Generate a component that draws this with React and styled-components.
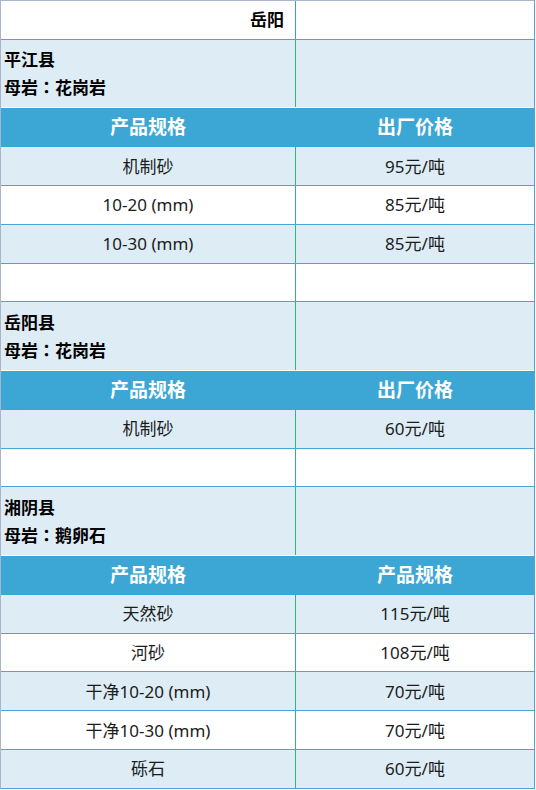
import React from 'react';
import styled, { createGlobalStyle } from 'styled-components';

const GlobalStyle = createGlobalStyle`
  html, body { margin: 0; padding: 0; background: #fff; }
  body { font-family: "Noto Sans", "Noto Sans CJK SC", sans-serif; }
`;

const LINE = '#49a5d5';
const GREEN = '#36b182';
const LIGHT = '#ddecf5';
const HEAD = '#3ca6d4';

const sections = [
  {
    county: '平江县',
    rock: '花岗岩',
    head: ['产品规格', '出厂价格'],
    items: [
      ['机制砂', '95元/吨'],
      ['10-20 (mm)', '85元/吨'],
      ['10-30 (mm)', '85元/吨'],
    ],
  },
  {
    county: '岳阳县',
    rock: '花岗岩',
    head: ['产品规格', '出厂价格'],
    items: [['机制砂', '60元/吨']],
  },
  {
    county: '湘阴县',
    rock: '鹅卵石',
    head: ['产品规格', '产品规格'],
    items: [
      ['天然砂', '115元/吨'],
      ['河砂', '108元/吨'],
      ['干净10-20 (mm)', '70元/吨'],
      ['干净10-30 (mm)', '70元/吨'],
      ['砾石', '60元/吨'],
    ],
  },
];

const Sheet = styled.div`
  width: 535px;
  box-sizing: border-box;
  border-top: 1px solid #a9b5ca;
  border-left: 1px solid #a9b5ca;
  border-right: 1px solid ${LINE};
`;

const Row = styled.div`
  display: grid;
  grid-template-columns: 295px 1fr;
  box-sizing: border-box;
  height: ${(p) => (p.$tall ? '68.6px' : '38.8px')};
  background: ${(p) => (p.$head ? HEAD : p.$light ? LIGHT : '#fff')};
  border-bottom: ${(p) => (p.$head ? 'none' : `1px solid ${p.$white ? '#fff' : LINE}`)};
`;

const Cell = styled.div`
  display: flex;
  flex-direction: column;
  justify-content: center;
  align-items: ${(p) => (p.$align === 'right' ? 'flex-end' : p.$align === 'left' ? 'flex-start' : 'center')};
  padding: ${(p) => (p.$align === 'right' ? '0 11px 0 0' : p.$align === 'left' ? '0 0 0 3px' : '0')};
  font-size: ${(p) => (p.$head ? '19px' : '17px')};
  font-weight: ${(p) => (p.$bold || p.$head ? 700 : 400)};
  color: ${(p) => (p.$head ? '#fff' : p.$bold ? '#000' : '#1c1c1c')};
  line-height: 27px;
  white-space: nowrap;
  &:first-child {
    border-right: 1px solid ${(p) => (p.$head ? HEAD : GREEN)};
  }
`;

const Line = styled.span`
  display: block;
`;

const Colon = styled.span`
  font-family: "Noto Sans CJK TC", "Noto Sans CJK SC", sans-serif;
`;

function Section({ data, last }) {
  return (
    <>
      <Row $tall $light $white>
        <Cell $align="left" $bold>
          <Line>{data.county}</Line>
          <Line>
            母岩<Colon>：</Colon>{data.rock}
          </Line>
        </Cell>
        <Cell />
      </Row>
      <Row $head>
        <Cell $head>{data.head[0]}</Cell>
        <Cell $head>{data.head[1]}</Cell>
      </Row>
      {data.items.map(([name, price], i) => (
        <Row key={name} $light={i % 2 === 0}>
          <Cell>{name}</Cell>
          <Cell>{price}</Cell>
        </Row>
      ))}
      {!last && (
        <Row>
          <Cell />
          <Cell />
        </Row>
      )}
    </>
  );
}

export default function App() {
  return (
    <>
      <GlobalStyle />
      <Sheet>
        <Row>
          <Cell $align="right" $bold>岳阳</Cell>
          <Cell />
        </Row>
        {sections.map((s, i) => (
          <Section key={s.county} data={s} last={i === sections.length - 1} />
        ))}
      </Sheet>
    </>
  );
}
